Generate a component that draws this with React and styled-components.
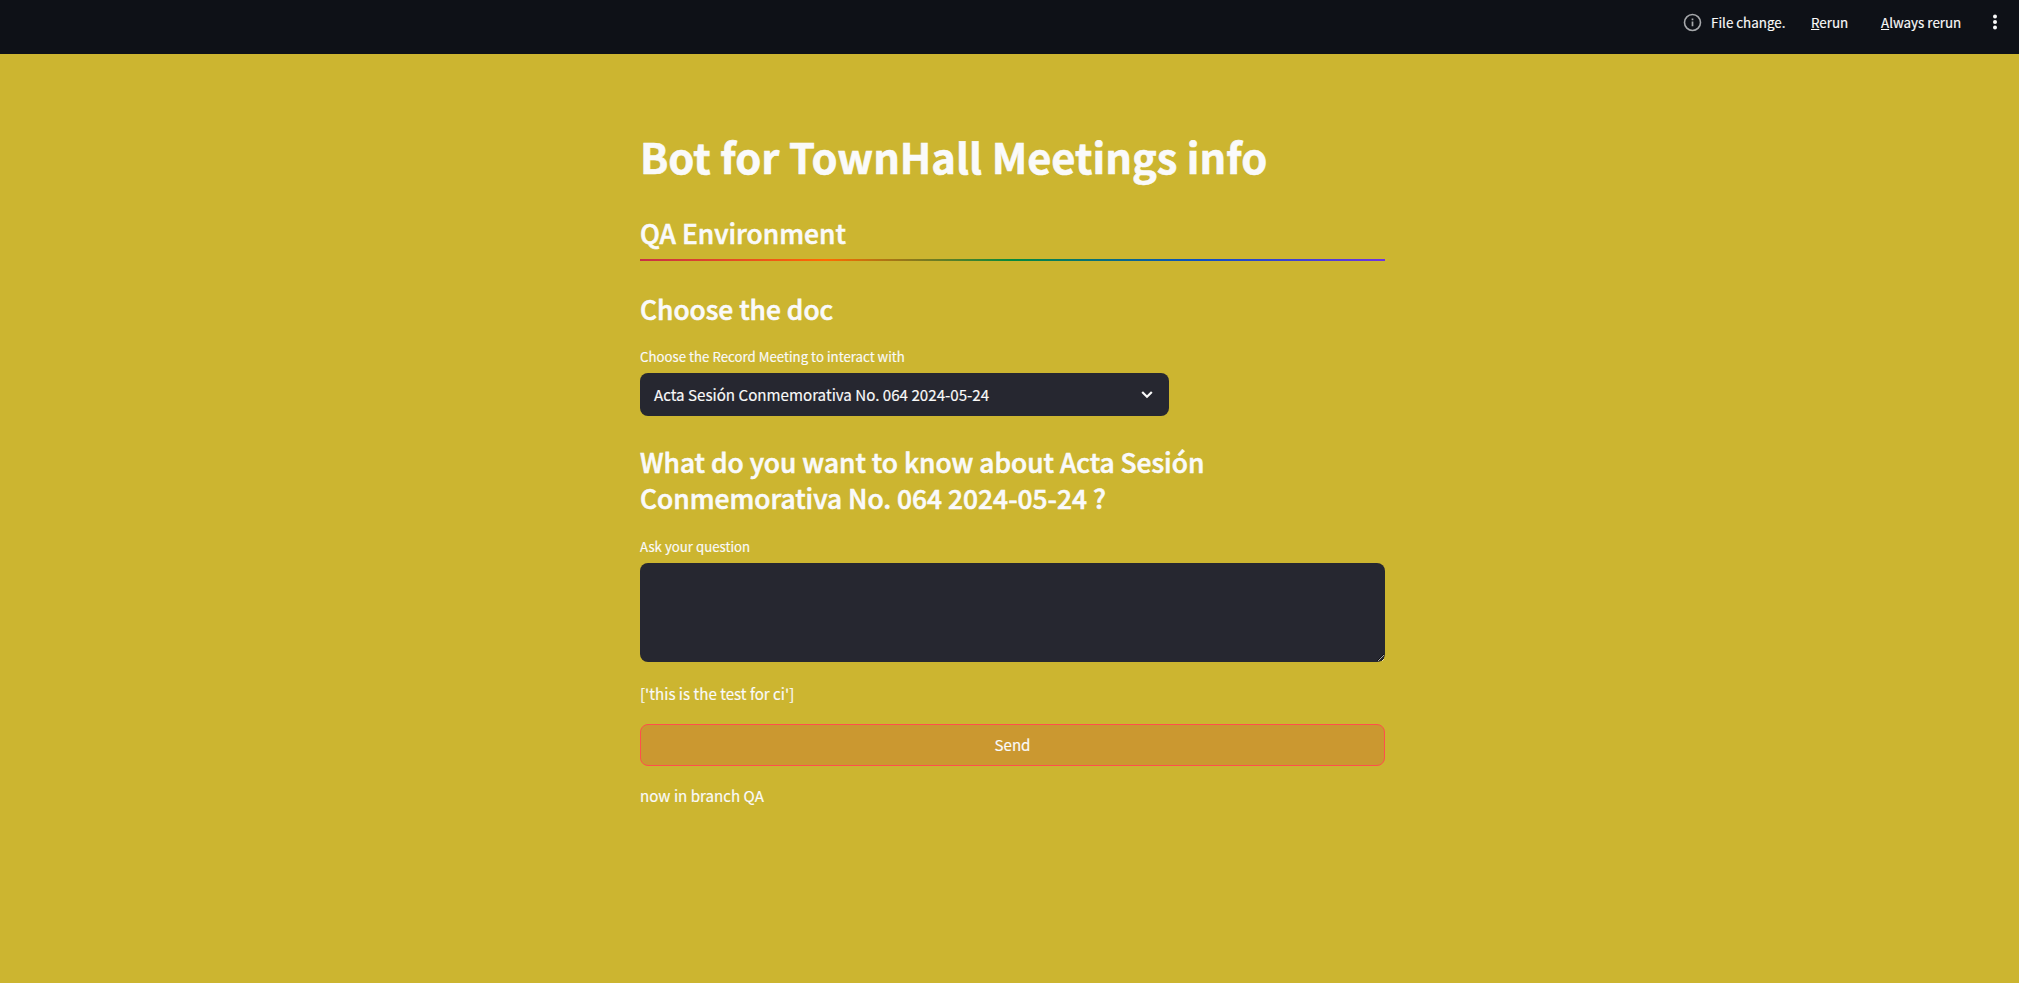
import React from "react";
import styled, { createGlobalStyle } from "styled-components";

const GlobalStyle = createGlobalStyle`
  * { box-sizing: border-box; }
  body {
    margin: 0;
    background: #ccb530;
    color: #fafafa;
    font-family: "Noto Sans CJK SC", "Noto Sans", sans-serif;
    -webkit-text-stroke: 0.15px #fafafa;
  }
`;

const Page = styled.div`
  min-height: 983px;
  background: #ccb530;
`;

const Header = styled.header`
  display: flex;
  justify-content: flex-end;
  align-items: flex-start;
  height: 54px;
  padding: 12px 17px 0 0;
  background: #0e1117;
  font-size: 13.4px;
  line-height: 20px;
  white-space: nowrap;
`;

const Status = styled.div`
  display: flex;
  align-items: center;
  gap: 9px;
  height: 20px;
  width: 128px;
`;

const HeaderButton = styled.button`
  width: ${(p) => p.$width}px;
  height: 20px;
  padding: 0;
  border: 0;
  background: none;
  color: inherit;
  font: inherit;
  text-align: left;
  u { text-underline-offset: 1px; }
`;

const MenuButton = styled.button`
  display: flex;
  width: 14px;
  height: 20px;
  padding: 0;
  border: 0;
  background: none;
  color: inherit;
  justify-content: center;
  align-items: center;
`;

const Main = styled.main`
  display: flex;
  flex-direction: column;
  width: 745px;
  margin-left: 640px;
  padding-top: 74px;
`;

const Title = styled.h1`
  margin: 0 0 31px;
  font-size: 41.65px;
  font-weight: 700;
  line-height: 56px;
  white-space: nowrap;
  -webkit-text-stroke: 0.6px #fafafa;
`;

const Heading = styled.h2`
  margin: 0 0 ${(p) => p.$gap}px;
  font-size: 26.35px;
  font-weight: 500;
  line-height: 36px;
  white-space: nowrap;
  -webkit-text-stroke: 0.6px #fafafa;
`;

const Rule = styled.hr`
  width: 100%;
  height: 2px;
  margin: 0 0 30px;
  border: 0;
  background: linear-gradient(to right, #c82f45, #ff6a00 25%, #058a3c 50%, #0a50c4 75%, #6f35e0);
`;

const Label = styled.label`
  margin-bottom: 6px;
  font-size: 13.26px;
  line-height: 20px;
`;

const Select = styled.div`
  display: flex;
  align-items: center;
  justify-content: space-between;
  width: 529px;
  height: 43px;
  margin-bottom: 28px;
  padding: 0 13px 1px 14px;
  border-radius: 8px;
  background: #262730;
  font-size: 15.15px;
  line-height: 24px;
`;

const QuestionBox = styled.textarea`
  display: block;
  width: 100%;
  height: 99px;
  margin: 0 0 18px;
  padding: 14px;
  border: 0;
  border-radius: 8px;
  background: #262730;
  color: #fafafa;
  color-scheme: dark;
  font: inherit;
`;

const Text = styled.p`
  margin: 0 0 18px;
  font-size: 15.15px;
  line-height: 26px;
`;

const SendButton = styled.button`
  width: 100%;
  height: 42px;
  margin-bottom: 16px;
  padding: 0 0 3px;
  border: 1px solid #ff4f4b;
  border-radius: 8px;
  background: #cb9830;
  color: #fafafa;
  font: inherit;
  font-size: 15.15px;
  line-height: 24px;
`;

export default function App() {
  return (
    <Page>
      <GlobalStyle />
      <Header>
        <Status>
          <svg width="19" height="19" viewBox="0 0 19 19" fill="none">
            <circle cx="9.5" cy="9.5" r="8" stroke="#a6a8ab" strokeWidth="1.6" />
            <path d="M9.5 8.6v4.6M9.5 5.6v1.7" stroke="#a6a8ab" strokeWidth="1.7" />
          </svg>
          <span>File change.</span>
        </Status>
        <HeaderButton $width={70}><u>R</u>erun</HeaderButton>
        <HeaderButton $width={107}><u>A</u>lways rerun</HeaderButton>
        <MenuButton aria-label="Menu">
          <svg width="6" height="16" viewBox="0 0 6 16" fill="#fafafa">
            <circle cx="3" cy="2.5" r="2" />
            <circle cx="3" cy="8" r="2" />
            <circle cx="3" cy="13.5" r="2" />
          </svg>
        </MenuButton>
      </Header>
      <Main>
        <Title>Bot for TownHall Meetings info</Title>
        <Heading $gap={8}>QA Environment</Heading>
        <Rule />
        <Heading $gap={20}>Choose the doc</Heading>
        <Label>Choose the Record Meeting to interact with</Label>
        <Select>
          <span>Acta Sesión Conmemorativa No. 064 2024-05-24</span>
          <svg width="18" height="18" viewBox="0 0 18 18" fill="none">
            <path d="M4.2 7L9 11.7l4.8-4.7" stroke="#fafafa" strokeWidth="2.2" />
          </svg>
        </Select>
        <Heading $gap={21}>
          What do you want to know about Acta Sesión
          <br />
          Conmemorativa No. 064 2024-05-24 ?
        </Heading>
        <Label htmlFor="question">Ask your question</Label>
        <QuestionBox id="question" />
        <Text>['this is the test for ci']</Text>
        <SendButton>Send</SendButton>
        <Text>now in branch QA</Text>
      </Main>
    </Page>
  );
}
